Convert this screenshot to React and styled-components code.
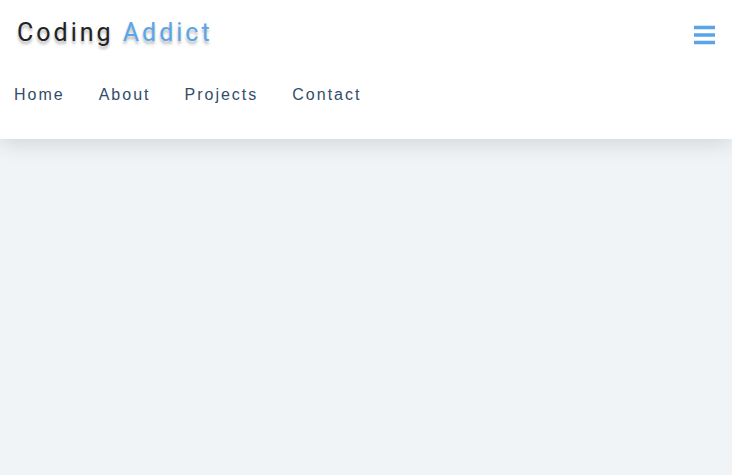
import React, { useState } from "react";
import styled, { createGlobalStyle } from "styled-components";

const GlobalStyle = createGlobalStyle`
  *, *::before, *::after {
    margin: 0;
    padding: 0;
    box-sizing: border-box;
  }
  body {
    background: #f0f4f7;
    font-family: "Liberation Sans", Arial, sans-serif;
    font-size: 16px;
    line-height: 24px;
  }
`;

const Page = styled.div`
  min-height: 100vh;
  background: #f0f4f7;
`;

const Nav = styled.nav`
  background: #fff;
  box-shadow: 0 5px 20px rgba(0, 0, 0, 0.12);
`;

const NavHeader = styled.div`
  display: flex;
  align-items: center;
  justify-content: space-between;
  padding: 17px 17px 15px;
`;

const Logo = styled.a`
  color: #222;
  font-family: Roboto, sans-serif;
  font-size: 25px;
  line-height: 32px;
  letter-spacing: 3px;
  text-decoration: none;
  text-shadow: 0 3px 3px rgba(0, 0, 0, 0.3);
`;

const Accent = styled.span`
  color: #5aa4e9;
`;

const Toggle = styled.button`
  display: flex;
  padding-top: 4px;
  border: none;
  background: transparent;
  color: #5aa4e9;
  cursor: pointer;
`;

const Links = styled.ul`
  display: flex;
  flex-wrap: wrap;
  gap: 6px;
  padding: 3px 0 16px;
  list-style: none;
`;

const NavLink = styled.a`
  display: block;
  padding: 16px 14px;
  color: #324d67;
  letter-spacing: 2px;
  text-decoration: none;
`;

const links = ["Home", "About", "Projects", "Contact"];

function BarsIcon() {
  return (
    <svg width="21" height="20" viewBox="0 0 21 20" fill="currentColor" aria-hidden="true">
      <path d="M0 .8h21v3.4H0zM0 8.3h21v3.4H0zM0 15.8h21v3.4H0z" />
    </svg>
  );
}

export default function App() {
  const [open, setOpen] = useState(true);
  return (
    <Page>
      <GlobalStyle />
      <Nav>
        <NavHeader>
          <Logo href="#">
            Coding <Accent>Addict</Accent>
          </Logo>
          <Toggle
            type="button"
            aria-label="Toggle navigation"
            aria-expanded={open}
            onClick={() => setOpen(!open)}
          >
            <BarsIcon />
          </Toggle>
        </NavHeader>
        {open && (
          <Links>
            {links.map((name) => (
              <li key={name}>
                <NavLink href={`#${name.toLowerCase()}`}>{name}</NavLink>
              </li>
            ))}
          </Links>
        )}
      </Nav>
    </Page>
  );
}
